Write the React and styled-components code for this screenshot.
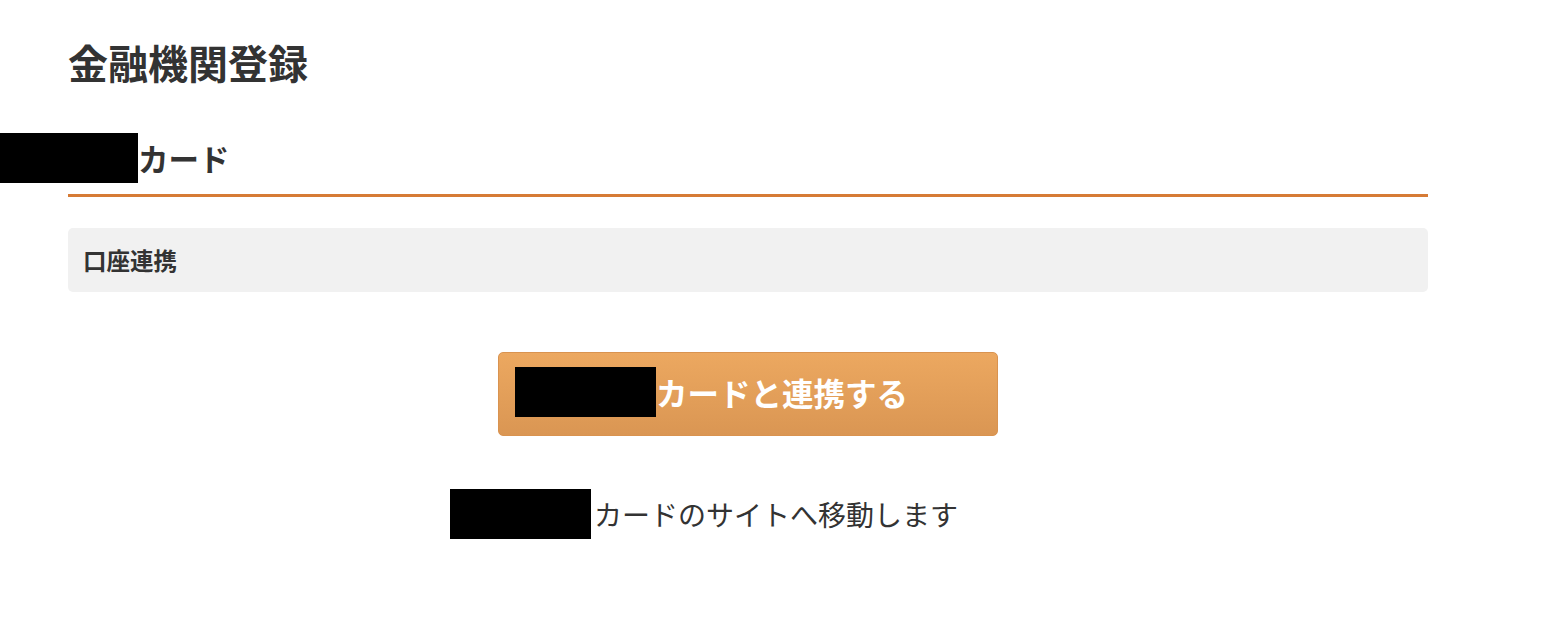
import React from 'react'
import styled, { createGlobalStyle } from 'styled-components'

const GlobalStyle = createGlobalStyle`
    body {
        margin: 0;
        background: #fff;
        color: #333;
        font-family: "Noto Sans CJK JP", "Noto Sans", sans-serif;
    }
`

const Page = styled.div`
    width: 1360px;
    padding: 37px 0 0 68px;
`

const Title = styled.h1`
    margin: 0;
    height: 50px;
    font-size: 40px;
    line-height: 50px;
    font-weight: 700;
`

const SectionHead = styled.h2`
    display: flex;
    align-items: center;
    margin: 46px 0 0;
    height: 50px;
    padding-bottom: 11px;
    border-bottom: 3px solid #d67b35;
    font-size: 30.5px;
    font-weight: 700;
    line-height: 50px;
`

const Redacted = styled.span`
    display: inline-block;
    flex: none;
    width: ${props => props.width}px;
    height: 50px;
    margin-left: ${props => props.shift || 0}px;
    margin-right: ${props => props.gap || 0}px;
    background: #000;
`

const SubBar = styled.div`
    margin-top: 31px;
    height: 64px;
    display: flex;
    align-items: center;
    padding-left: 15px;
    background: #f1f1f1;
    border-radius: 5px;
    font-size: 23.5px;
    font-weight: 700;
`

const ButtonRow = styled.div`
    display: flex;
    justify-content: center;
    margin-top: 60px;
`

const LinkButton = styled.button`
    box-sizing: border-box;
    width: 500px;
    height: 84px;
    display: flex;
    align-items: center;
    padding: 0 0 4px 16px;
    border: 1px solid #d99350;
    border-radius: 5px;
    background: linear-gradient(#eca860, #da9653);
    color: #fff;
    font-family: inherit;
    font-size: 31.5px;
    font-weight: 700;
    cursor: pointer;
`

const Note = styled.p`
    display: flex;
    align-items: center;
    justify-content: center;
    margin: 53px 0 0;
    height: 50px;
    padding-right: 88px;
    font-size: 28px;
    line-height: 50px;
`

const App = () => {
    return (
        <Page>
            <GlobalStyle />
            <Title>金融機関登録</Title>
            <SectionHead>
                <Redacted width={138} shift={-68} />
                カード
            </SectionHead>
            <SubBar>口座連携</SubBar>
            <ButtonRow>
                <LinkButton>
                    <Redacted width={141} />
                    カードと連携する
                </LinkButton>
            </ButtonRow>
            <Note>
                <Redacted width={141} gap={3} />
                カードのサイトへ移動します
            </Note>
        </Page>
    )
}

export default App
